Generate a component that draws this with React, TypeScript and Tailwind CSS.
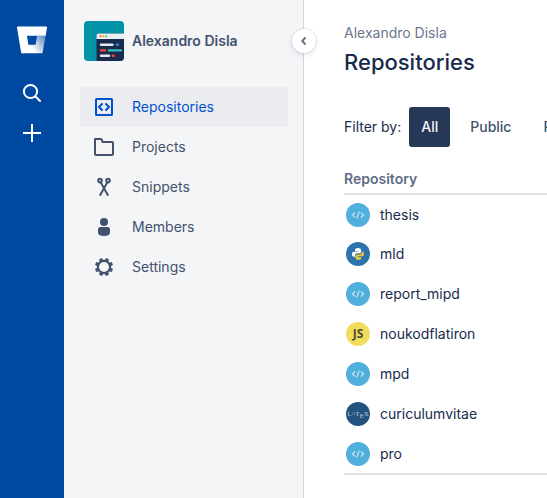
import React from "react";

function BitbucketLogo() {
  return (
    <svg width="30" height="28" viewBox="0 0 31 28" aria-hidden="true">
      <defs>
        <linearGradient id="bucket" x1="30" y1="10" x2="15" y2="22" gradientUnits="userSpaceOnUse">
          <stop offset="0.1" stopColor="#fff" stopOpacity="0.4" />
          <stop offset="1" stopColor="#fff" />
        </linearGradient>
      </defs>
      <path
        fill="#fff"
        d="M1 0a1 1 0 0 0-1 1.200L4.200 26.600a1.400 1.400 0 0 0 1.400 1.200h.9L12.600 18.800h-.9L10.300 9.500H29.600L31 1.200A1 1 0 0 0 30 0z"
      />
      <path
        fill="url(#bucket)"
        d="M29.600 9.500H20.800L19.200 18.800H12.600L4.900 27.500a1.400 1.400 0 0 0 .9.300H25.500a1 1 0 0 0 1-.9z"
      />
    </svg>
  );
}

function ProjectAvatar() {
  return (
    <svg className="shrink-0 rounded-[4px]" width="40" height="40" viewBox="0 0 40 40" aria-hidden="true">
      <rect width="40" height="40" fill="#0292a8" />
      <path d="M12.500 14.500a2 2 0 0 1 2-2H40V40H12.500z" fill="#1b2b4b" />
      <path d="M12.500 18v-3.500a2 2 0 0 1 2-2H40V18z" fill="#ebeef3" />
      <circle cx="16.500" cy="15.300" r="1.100" fill="#ff5630" />
      <circle cx="19.300" cy="15.300" r="1.100" fill="#ffab00" />
      <circle cx="22.200" cy="15.300" r="1.100" fill="#36c77b" />
      <g strokeWidth="2.400" strokeLinecap="round">
        <path d="M17 23.700h11.500" stroke="#e3e8ef" />
        <path d="M32.700 23.700h1.300" stroke="#2684d8" />
        <path d="M17 29.400h4" stroke="#f04343" />
        <path d="M25 29.400h12" stroke="#35c0bd" />
        <path d="M17 34.800h8" stroke="#e3e8ef" />
        <path d="M28.700 34.800h1" stroke="#f04343" />
      </g>
    </svg>
  );
}

const line = { fill: "none", stroke: "currentColor", strokeWidth: 2 } as const;

const icons: Record<string, React.ReactNode> = {
  repositories: (
    <>
      <rect x="4" y="4" width="16" height="16" rx="0.500" {...line} />
      <path d="M10 9l-3 3 3 3M14 9l3 3-3 3" {...line} strokeLinecap="round" />
    </>
  ),
  projects: (
    <path d="M3 4h5.700a1 1 0 0 1 1 .7L10.500 7H20a1 1 0 0 1 1 1v11a1 1 0 0 1-1 1H4a1 1 0 0 1-1-1z" {...line} strokeLinejoin="round" />
  ),
  snippets: (
    <>
      <circle cx="8" cy="5.600" r="1.800" {...line} />
      <circle cx="16" cy="5.600" r="1.800" {...line} />
      <path d="M8.800 7.400L15.800 20M15.200 7.400L8.200 20" {...line} strokeLinecap="round" />
    </>
  ),
  members: (
    <>
      <circle cx="12" cy="7" r="4" fill="currentColor" />
      <path d="M6 14.500A2.500 2.500 0 0 1 8.500 12h7a2.500 2.500 0 0 1 2.500 2.500v3C18 20 15 21 12 21s-6-1-6-3.500z" fill="currentColor" />
    </>
  ),
  settings: (
    <>
      <circle cx="12" cy="12" r="6.100" {...line} strokeWidth={2.200} />
      <g fill="currentColor">
        {[22.5, 67.5, 112.5, 157.5, 202.5, 247.5, 292.5, 337.5].map((a) => (
          <rect key={a} x="10.200" y="2.900" width="3.600" height="3.200" rx="0.900" transform={`rotate(${a} 12 12)`} />
        ))}
      </g>
    </>
  ),
};

const navItems = [
  { id: "repositories", label: "Repositories" },
  { id: "projects", label: "Projects" },
  { id: "snippets", label: "Snippets" },
  { id: "members", label: "Members" },
  { id: "settings", label: "Settings" },
];

const repositories = [
  { name: "thesis", kind: "code" },
  { name: "mld", kind: "python" },
  { name: "report_mipd", kind: "code" },
  { name: "noukodflatiron", kind: "js" },
  { name: "mpd", kind: "code" },
  { name: "curiculumvitae", kind: "latex" },
  { name: "pro", kind: "code" },
];

function RepoAvatar({ kind }: { kind: string }) {
  const base = "flex size-6 shrink-0 items-center justify-center overflow-hidden rounded-full";
  if (kind === "js") {
    return <span className={`${base} bg-[#f2dc5d] font-['Open_Sans',sans-serif] text-xs font-bold text-[#4b4a35]`}>JS</span>;
  }
  if (kind === "latex") {
    return (
      <span className={`${base} bg-[#23527f] font-['Liberation_Serif',serif] text-[#bccbdc]`}>
        <svg width="22" height="12" viewBox="0 0 22 12" fill="currentColor" fontSize="7" aria-label="LaTeX">
          <text x="11" y="8" textAnchor="middle">
            L<tspan fontSize="5" dy="-1">A</tspan><tspan dy="1">T</tspan><tspan dy="2">E</tspan><tspan dy="-2">X</tspan>
          </text>
        </svg>
      </span>
    );
  }
  if (kind === "python") {
    return (
      <span className={`${base} bg-[#2d73ad]`}>
        <svg width="14" height="14" viewBox="0 0 14 14" aria-hidden="true">
          <path fill="#fff" d="M7 1C4.500 1 4 2 4 3v1.200h3.200v.6H2.800C1.500 4.800 1 6 1 7.200s.6 2.500 1.700 2.500H4V8.200C4 7 4.900 6.200 6 6.200h2.800c.8 0 1.300-.6 1.300-1.400V3C10.100 1.700 9 1 7 1z" />
          <path fill="#e6c33f" d="M7.300 13c2.400 0 2.900-1 2.900-2V9.900H7.100v-.6h4.300c1.200 0 1.600-1.200 1.600-2.300 0-1.200-.5-2.400-1.600-2.400h-.7v1c0 1-.9 1.800-1.900 1.800H6C5 7.400 4.400 8 4.400 8.900V11c0 1.300 1.100 2 2.900 2z" />
        </svg>
      </span>
    );
  }
  return (
    <span className={`${base} bg-[#50afdc]`}>
      <svg width="14" height="10" viewBox="0 0 14 10" fill="none" stroke="#c4e5f4" strokeWidth="1.200" aria-hidden="true">
        <path d="M4 2.500L1.500 5 4 7.500M10 2.500L12.500 5 10 7.500M8.200 1.500L5.800 8.500" />
      </svg>
    </span>
  );
}

function FilterButton({ label, active = false }: { label: string; active?: boolean }) {
  return (
    <button
      type="button"
      aria-pressed={active}
      className={`h-10 shrink-0 rounded-[3px] px-3 font-medium ${active ? "bg-[#253858] text-[#f4f5f7]" : "text-[#42526e]"}`}
    >
      {label}
    </button>
  );
}

export default function App() {
  return (
    <div className="flex min-h-screen overflow-hidden bg-white font-[Inter,sans-serif] text-sm leading-5 text-[#172b4d]">
      <nav aria-label="Global" className="flex w-16 shrink-0 flex-col items-center bg-[#0049a0] pt-[26px] text-white">
        <a href="#home" aria-label="Bitbucket">
          <BitbucketLogo />
        </a>
        <button type="button" aria-label="Search" className="mt-[19px] flex size-10 items-center justify-center">
          <svg width="24" height="24" viewBox="0 0 24 24" fill="none" stroke="currentColor" strokeWidth="2" strokeLinecap="round" aria-hidden="true">
            <circle cx="10.500" cy="10.500" r="6.600" />
            <path d="M15.500 15.500l4.500 4.500" />
          </svg>
        </button>
        <button type="button" aria-label="Create" className="flex size-10 items-center justify-center">
          <svg width="24" height="24" viewBox="0 0 24 24" stroke="currentColor" strokeWidth="2" aria-hidden="true">
            <path d="M12 3v18M3 12h18" />
          </svg>
        </button>
      </nav>

      <aside className="relative w-60 shrink-0 bg-[#f4f5f7] px-4 pt-[21px] text-[#42526e] shadow-[inset_-1px_0_0_#d5d7dc]">
        <div className="flex items-center gap-2 pl-1">
          <ProjectAvatar />
          <span className="font-semibold">Alexandro Disla</span>
        </div>
        <ul className="mt-[26px]">
          {navItems.map((item, i) => (
            <li key={item.id}>
              <a
                href={`#${item.id}`}
                className={`flex h-10 items-center gap-4 rounded-[3px] px-3 ${i === 0 ? "bg-[#ebecf0] text-[#0052cc]" : ""}`}
              >
                <svg width="24" height="24" viewBox="0 0 24 24" aria-hidden="true">
                  {icons[item.id]}
                </svg>
                {item.label}
              </a>
            </li>
          ))}
        </ul>
        <button
          type="button"
          aria-label="Collapse sidebar"
          className="absolute top-[29px] -right-3 flex size-6 items-center justify-center rounded-full bg-white text-[#6b778c] shadow-[0_0_0_1px_rgba(9,30,66,0.08),0_2px_4px_1px_rgba(9,30,66,0.08)]"
        >
          <svg width="10" height="10" viewBox="0 0 10 10" fill="none" stroke="currentColor" strokeWidth="2" strokeLinecap="round" strokeLinejoin="round" aria-hidden="true">
            <path d="M6 2L3.200 5 6 8" />
          </svg>
        </button>
      </aside>

      <main className="min-w-0 flex-1 overflow-hidden pt-[23px] pl-10">
        <a href="#workspace" className="block text-[#6b778c]">Alexandro Disla</a>
        <h1 className="mt-[5px] text-[22px] leading-7 font-medium">Repositories</h1>
        <div className="mt-[31px] flex items-center gap-2">
          <span className="shrink-0">Filter by:</span>
          <FilterButton label="All" active />
          <FilterButton label="Public" />
          <FilterButton label="Private" />
        </div>
        <table className="mt-5 w-full border-collapse">
          <thead>
            <tr className="border-b-2 border-[#dfe1e6]">
              <th scope="col" className="pt-0.5 pb-1 text-left font-semibold text-[#5e6c84]">Repository</th>
            </tr>
          </thead>
          <tbody className="border-b-2 border-[#dfe1e6]">
            {repositories.map((repo) => (
              <tr key={repo.name} className="h-10">
                <td className="p-0 pl-0.5">
                  <a href={`#${repo.name}`} className="flex items-center gap-2.5">
                    <RepoAvatar kind={repo.kind} />
                    {repo.name}
                  </a>
                </td>
              </tr>
            ))}
          </tbody>
        </table>
      </main>
    </div>
  );
}
